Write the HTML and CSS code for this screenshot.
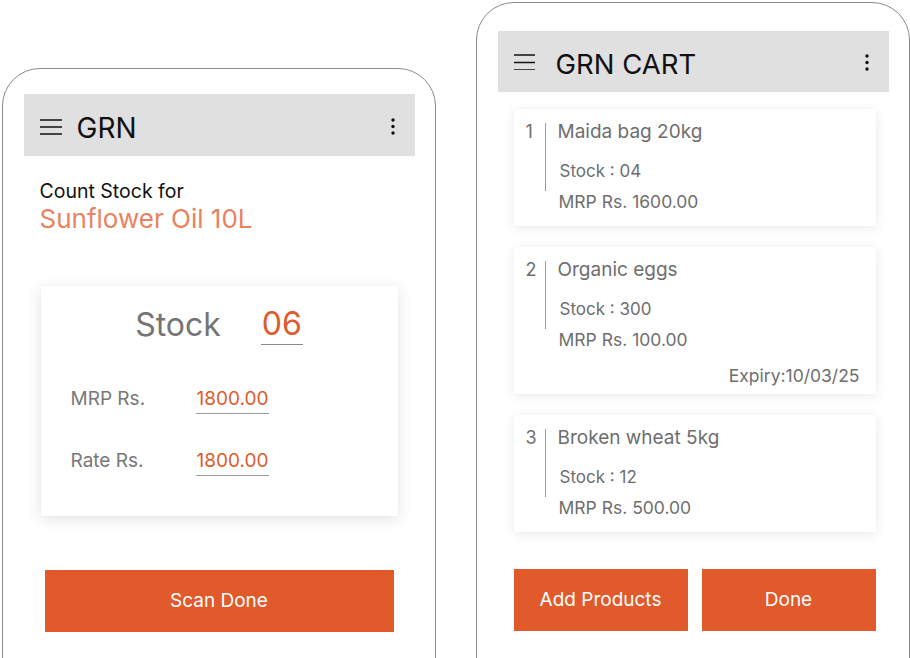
FILE: index.html
```html
<!DOCTYPE html>
<html>
<head>
<meta charset="utf-8">
<link rel="stylesheet" href="styles.css">
</head>
<body>
<div class="stage">
  <section class="phone phone-left">
    <header class="appbar">
      <svg class="menu" width="22" height="16" viewBox="0 0 22 16"><path d="M0 1h22M0 8h22M0 15h22" stroke="#111" stroke-width="1.6" fill="none"/></svg>
      <h1 class="title">GRN</h1>
      <svg class="kebab" width="4" height="17" viewBox="0 0 4 17"><circle cx="2" cy="2" r="1.7" fill="#111"/><circle cx="2" cy="8.5" r="1.7" fill="#111"/><circle cx="2" cy="15" r="1.7" fill="#111"/></svg>
    </header>
    <div class="intro">
      <div class="intro-label">Count Stock for</div>
      <div class="intro-product">Sunflower Oil 10L</div>
    </div>
    <div class="count-card">
      <div class="stock-row">
        <span class="stock-label">Stock</span>
        <span class="stock-value">06</span>
      </div>
      <div class="field-row field-first">
        <span class="field-label">MRP Rs.</span>
        <span class="field-value">1800.00</span>
      </div>
      <div class="field-row field-second">
        <span class="field-label">Rate Rs.</span>
        <span class="field-value">1800.00</span>
      </div>
    </div>
    <button class="btn btn-scan">Scan Done</button>
  </section>

  <section class="phone phone-right">
    <header class="appbar appbar-right">
      <svg class="menu" width="21" height="16" viewBox="0 0 21 16"><path d="M0 1h21M0 8.5h21M0 16h21" stroke="#111" stroke-width="1.6" fill="none"/></svg>
      <h1 class="title title-cart">GRN CART</h1>
      <svg class="kebab" width="4" height="17" viewBox="0 0 4 17"><circle cx="2" cy="2" r="1.7" fill="#111"/><circle cx="2" cy="8.5" r="1.7" fill="#111"/><circle cx="2" cy="15" r="1.7" fill="#111"/></svg>
    </header>
    <div class="cart-list">
      <div class="item">
        <div class="item-top">
          <span class="num">1</span>
          <div class="info">
            <div class="name">Maida bag 20kg</div>
            <div class="stock">Stock : 04</div>
          </div>
        </div>
        <div class="mrp">MRP Rs. 1600.00</div>
      </div>
      <div class="item">
        <div class="item-top">
          <span class="num">2</span>
          <div class="info">
            <div class="name">Organic eggs</div>
            <div class="stock">Stock : 300</div>
          </div>
        </div>
        <div class="mrp">MRP Rs. 100.00</div>
        <div class="expiry">Expiry:10/03/25</div>
      </div>
      <div class="item">
        <div class="item-top">
          <span class="num">3</span>
          <div class="info">
            <div class="name">Broken wheat 5kg</div>
            <div class="stock">Stock : 12</div>
          </div>
        </div>
        <div class="mrp">MRP Rs. 500.00</div>
      </div>
    </div>
    <div class="actions">
      <button class="btn btn-half">Add Products</button>
      <button class="btn btn-half">Done</button>
    </div>
  </section>
</div>
</body>
</html>
```
FILE: styles.css
```css
* { box-sizing: border-box; }
html, body {
  margin: 0;
  padding: 0;
  background: #ffffff;
  width: 910px;
  height: 658px;
  overflow: hidden;
  font-family: Inter, "Noto Sans", "Liberation Sans", sans-serif;
}
.stage {
  display: flex;
  align-items: flex-start;
  gap: 40px;
  padding-left: 2px;
}
.phone {
  width: 434px;
  border: 1.5px solid #8a8a8a;
  border-radius: 38px;
  background: #fff;
  flex: none;
}
.phone-left {
  margin-top: 68px;
  height: 640px;
  padding: 24.5px 20.5px 0;
}
.phone-right {
  margin-top: 2px;
  height: 700px;
  padding: 27.5px 20.5px 0;
}
.appbar {
  height: 62px;
  background: #e0e0e0;
  display: flex;
  align-items: center;
  padding: 4px 20px 0 16px;
}
.appbar-right {
  height: 61px;
  padding: 2px 20px 0 16px;
}
.menu { flex: none; display: block; }
.kebab { flex: none; display: block; margin-left: auto; }
.title {
  margin: 2px 0 0 15px;
  font-size: 28px;
  font-weight: 400;
  color: #111;
  line-height: 32px;
}
.title-cart {
  margin-left: 21px;
  font-size: 27.5px;
  margin-top: 3px;
}
.intro {
  padding-left: 16px;
  margin-top: 23px;
}
.intro-label {
  font-size: 19.5px;
  line-height: 24px;
  color: #111;
}
.intro-product {
  margin-top: 1px;
  font-size: 26px;
  line-height: 30px;
  color: #e8825f;
}
.count-card {
  margin: 52px 17px 0 17px;
  background: #fff;
  box-shadow: 0 3px 14px rgba(0, 0, 0, 0.12);
  padding: 18px 30px 40px;
}
.stock-row {
  display: flex;
  justify-content: center;
  align-items: flex-end;
  gap: 40px;
  line-height: 40px;
  font-size: 32px;
}
.stock-label { color: #757575; }
.stock-value {
  color: #dd5c2d;
  border-bottom: 1px solid #8a8a8a;
  padding: 0 1px;
}
.field-row {
  display: flex;
  align-items: flex-start;
  font-size: 19px;
  line-height: 24px;
}
.field-first { margin-top: 42px; }
.field-second { margin-top: 35px; }
.field-label {
  width: 125px;
  color: #777;
}
.field-value {
  color: #dd5c2d;
  padding: 0 1px 2px;
  border-bottom: 1.5px solid #9a9a9a;
}
.btn {
  border: none;
  background: #e15a2b;
  color: #fff;
  font-family: Inter, "Noto Sans", "Liberation Sans", sans-serif;
  font-size: 19px;
  height: 62px;
  display: block;
  cursor: pointer;
}
.btn-scan {
  width: 349px;
  margin: 54px 0 0 21px;
}
.cart-list {
  margin: 17px 13px 0 16px;
  display: flex;
  flex-direction: column;
  gap: 21px;
}
.item {
  background: #fff;
  box-shadow: 0 2px 10px rgba(0, 0, 0, 0.09);
  padding: 14px 16px 14px 12px;
  color: #6e6e6e;
}
.item-top {
  display: flex;
  align-items: flex-start;
}
.num {
  width: 19px;
  font-size: 18px;
  line-height: 18px;
}
.info {
  border-left: 1px solid #9a9a9a;
  padding: 0 0 10px 12px;
}
.name {
  font-size: 19px;
  line-height: 18px;
}
.stock {
  margin-top: 20px;
  padding-left: 2px;
  font-size: 17px;
  line-height: 20px;
}
.mrp {
  padding-left: 33px;
  margin-top: 1px;
  font-size: 17.5px;
  line-height: 20px;
}
.expiry {
  margin-top: 16px;
  margin-bottom: -6px;
  text-align: right;
  font-size: 17.5px;
  line-height: 20px;
}
.actions {
  display: flex;
  gap: 14px;
  margin: 37px 0 0 16px;
}
.btn-half { width: 174px; }
```
